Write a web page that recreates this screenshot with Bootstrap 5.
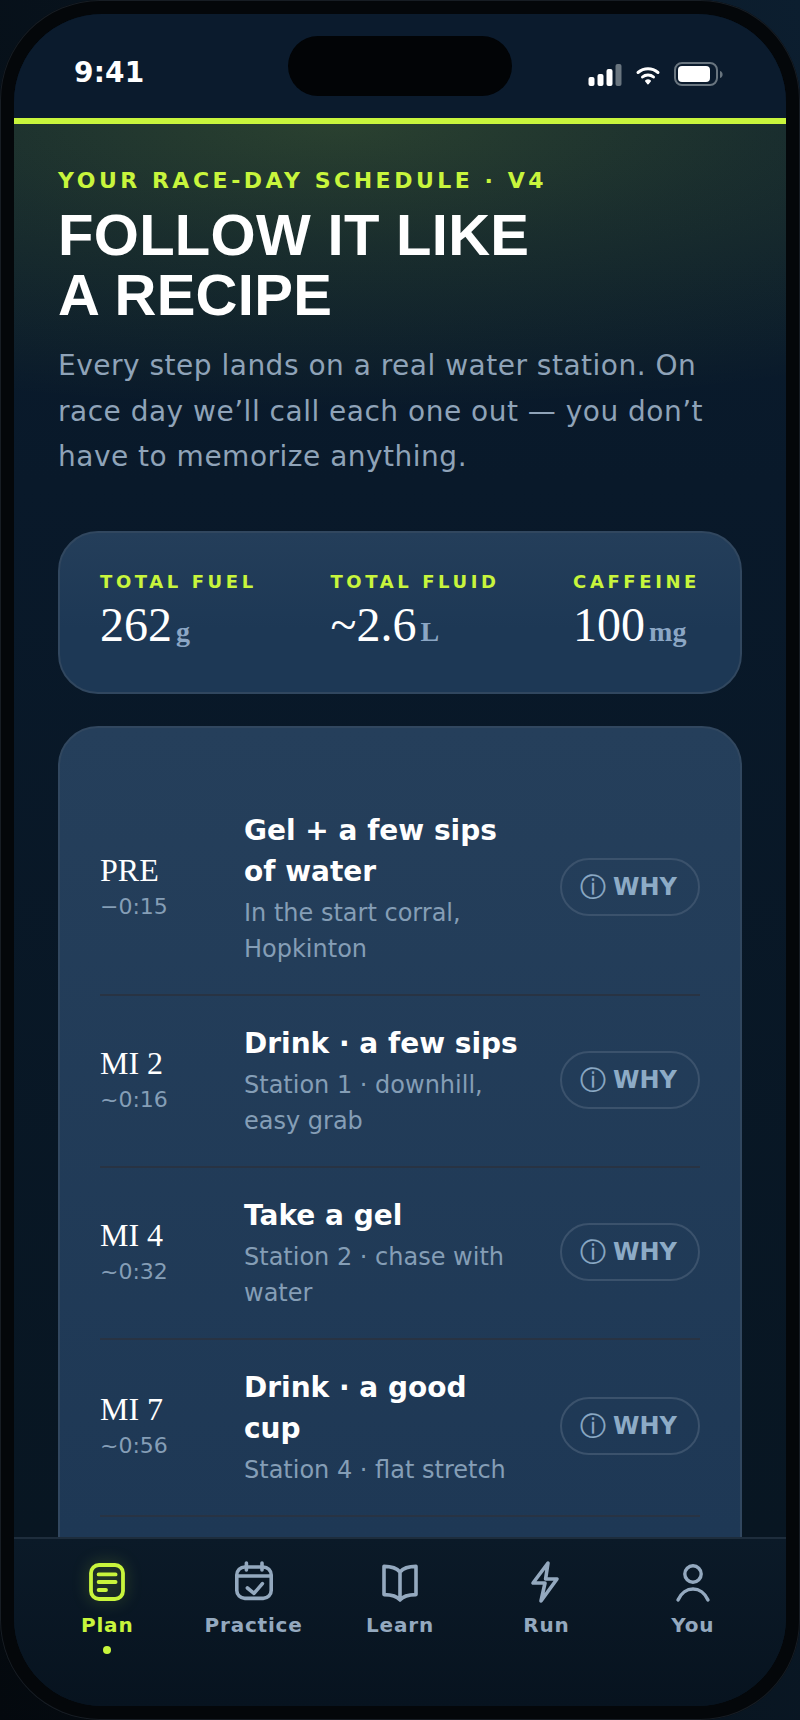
<!doctype html>
<html lang="en"><head><meta charset="utf-8"><title>Plan</title>
<link href="https://cdn.jsdelivr.net/npm/bootstrap@5.3.0/dist/css/bootstrap.min.css" rel="stylesheet">
<style>
html,body{height:100%;margin:0;overflow:hidden}
body{font-family:"DejaVu Sans",sans-serif;color:#fff;background:linear-gradient(75deg,#04090e,#0c1e2f)}
.device{width:800px;height:1720px;border-radius:100px;background:#04070a;padding:14px;box-shadow:inset 0 0 0 1px #171d24}
.screen{height:100%;border-radius:88px;overflow:hidden;background:#081624;position:relative}
.statusrow{height:104px;background:#0b1b2d;padding:0 62px 0 60px;position:relative;flex:none}
.clock{font-size:28px;font-weight:700;letter-spacing:.2px;line-height:1;margin-top:13px}
.island{position:absolute;left:274px;top:22px;width:224px;height:60px;border-radius:30px;background:#020406}
.sysicons{margin-top:20px}
.limebar{height:6px;background:#c8f53c;flex:none}
.viewport{flex:1 1 0;min-height:0;overflow:hidden;background:linear-gradient(180deg,#0a1c2d 0,#09192a 360px,#081622 100%)}
.hero{background:radial-gradient(130% 285px at 42% 0,rgba(200,245,60,.17),rgba(200,245,60,.085) 42%,rgba(200,245,60,0));padding:43px 44px 0 44px}
.eyebrow{font-size:22px;font-weight:700;letter-spacing:.16em;color:#c8f53c;line-height:28px}
.headline{font-family:"Liberation Sans",sans-serif;font-weight:700;font-size:58px;line-height:60px;letter-spacing:.3px;margin:10px 0 0;color:#fff}
.intro{font-size:28px;letter-spacing:.5px;line-height:45.5px;color:#8fa3b8;margin:18px 0 0}
.panel{--bs-card-bg:transparent;background:linear-gradient(180deg,#243e5a,#1d3855 60%);border:2px solid #31475f;margin:0 44px;border-radius:40px}
.stats{margin-top:51px;height:163px;padding:38px 40px 0}
.stat-k{font-size:18px;font-weight:700;letter-spacing:.2em;color:#c8f53c;line-height:22px;white-space:nowrap}
.stat-v{font-family:"Liberation Serif",serif;font-size:48px;line-height:48px;margin-top:8px;white-space:nowrap}
.stat-v b{font-size:28px;color:#8ba6c4;margin-left:4px}
.plan{margin-top:32px;padding:55px 40px 0;height:900px;background:linear-gradient(180deg,#253f5b,#1e3855 90%)}
.plan .list-group .list-group-item.step{padding:25px 0 27px;border-width:0 0 2px;border-style:solid;border-color:#283343;display:flex;align-items:center;background:transparent;color:#fff;border-radius:0}
.when{width:144px;flex:none}
.when-a{font-family:"Liberation Serif",serif;font-size:32px;line-height:40px}
.when-b{font-size:22px;line-height:34px;color:#859eb6}
.what{flex:1 1 0;min-width:0;padding:2px 36px 0 0}
.what-a{font-size:28px;font-weight:700;line-height:41px}
.what-b{font-size:24px;line-height:36px;color:#859eb6;margin-top:3px}
.whybtn{flex:none;width:140px;height:58px;border:2px solid #3b526c;border-radius:29px;color:#8dabc6;font-weight:700;font-size:24px;padding:0;display:flex;align-items:center;justify-content:center;gap:7px;background:transparent}
.infoglyph{font-weight:400;font-size:26px;line-height:1;margin-left:-3px;-webkit-text-stroke:.3px currentColor}
.tabbar{height:169px;flex:none;background:linear-gradient(180deg,#0b1a28,#07131f);border-top:2px solid #1e2d3c;padding:19px 20px 0}
.tab{width:146.4px;color:#94a9bf;font-size:20px;font-weight:700;letter-spacing:.8px;line-height:28px;text-decoration:none}
.tab svg{display:block;width:48px;height:48px;margin-bottom:5px}
.tab.on{color:#c8f53c}
.tab.on svg{filter:drop-shadow(0 0 8px rgba(200,245,60,.3))}
.pip{width:8px;height:8px;border-radius:50%;background:#c8f53c;margin-top:7px}
</style></head>
<body>
<div class="device"><div class="screen d-flex flex-column">
  <div class="statusrow d-flex align-items-center justify-content-between">
    <div class="clock">9:41</div><div class="island"></div>
    <svg class="sysicons" width="136" height="28" viewBox="0 0 136 28">
      <g fill="#fff"><rect x="0.500" y="15" width="6" height="9" rx="2"/><rect x="9.500" y="12" width="6" height="12" rx="2"/><rect x="18.500" y="7" width="6" height="17" rx="2"/></g>
      <rect x="27.500" y="2" width="6" height="22" rx="2" fill="#69757f"/>
      <g fill="none" stroke="#fff" stroke-linecap="round"><path d="M50 10.500C56 5.500 64 5.500 70 10.500" stroke-width="3"/><path d="M54.500 15C57.500 12.300 62.500 12.300 65.500 15" stroke-width="3"/></g><path d="M58 19C59.300 18 60.700 18 62 19L60 21.500Z" fill="#fff" stroke="#fff" stroke-width="2" stroke-linejoin="round"/>
      <rect x="87" y="1" width="42" height="22" rx="7" fill="none" stroke="#69757f" stroke-width="2"/><rect x="90" y="4" width="32" height="16" rx="4" fill="#fff"/><path d="M132 9v7c2-.6 2.600-2 2.600-3.500S134 9.600 132 9z" fill="#69757f"/>
    </svg>
  </div>
  <div class="limebar"></div>
  <div class="viewport">
    <div class="hero">
      <div class="eyebrow">YOUR RACE-DAY SCHEDULE · V4</div>
      <h1 class="headline">FOLLOW IT LIKE<br>A RECIPE</h1>
      <p class="intro">Every step lands on a real water station. On race day we’ll call each one out — you don’t have to memorize anything.</p>
    </div>
    <div class="card panel stats d-flex flex-row justify-content-between">
      <div><div class="stat-k">TOTAL FUEL</div><div class="stat-v">262<b>g</b></div></div>
      <div><div class="stat-k">TOTAL FLUID</div><div class="stat-v">~2.6<b>L</b></div></div>
      <div><div class="stat-k">CAFFEINE</div><div class="stat-v">100<b>mg</b></div></div>
    </div>
    <div class="card panel plan">
      <div class="list-group list-group-flush">
        <div class="list-group-item step"><div class="when"><div class="when-a">PRE</div><div class="when-b">−0:15</div></div><div class="what"><div class="what-a">Gel + a few sips of water</div><div class="what-b">In the start corral, Hopkinton</div></div><button class="btn whybtn"><span class="infoglyph">ⓘ</span>WHY</button></div>
        <div class="list-group-item step"><div class="when"><div class="when-a">MI 2</div><div class="when-b">~0:16</div></div><div class="what"><div class="what-a">Drink · a few sips</div><div class="what-b">Station 1 · downhill, easy grab</div></div><button class="btn whybtn"><span class="infoglyph">ⓘ</span>WHY</button></div>
        <div class="list-group-item step"><div class="when"><div class="when-a">MI 4</div><div class="when-b">~0:32</div></div><div class="what"><div class="what-a">Take a gel</div><div class="what-b">Station 2 · chase with water</div></div><button class="btn whybtn"><span class="infoglyph">ⓘ</span>WHY</button></div>
        <div class="list-group-item step"><div class="when"><div class="when-a">MI 7</div><div class="when-b">~0:56</div></div><div class="what"><div class="what-a">Drink · a good cup</div><div class="what-b">Station 4 · flat stretch</div></div><button class="btn whybtn"><span class="infoglyph">ⓘ</span>WHY</button></div>
      </div>
    </div>
  </div>
  <nav class="tabbar d-flex">
    <a class="tab on d-flex flex-column align-items-center" href="#"><svg viewBox="0 0 24 24" fill="none" stroke="currentColor" stroke-width="1.900" stroke-linecap="round"><rect x="4" y="3.500" width="16" height="17" rx="4"/><path d="M7.800 8.200H16.300M7.800 12H16.300M7.800 16H11.500"/></svg>Plan<span class="pip"></span></a>
    <a class="tab d-flex flex-column align-items-center" href="#"><svg viewBox="0 0 24 24" fill="none" stroke="currentColor" stroke-width="1.800" stroke-linecap="round" stroke-linejoin="round"><rect x="3.400" y="4.500" width="17.200" height="15.700" rx="4"/><path d="M3.400 9H20.600M8.200 2.500V6M16 2.500V6M8.700 15L12 17.700L16.200 12.800"/></svg>Practice</a>
    <a class="tab d-flex flex-column align-items-center" href="#"><svg viewBox="0 0 24 24" fill="none" stroke="currentColor" stroke-width="1.800" stroke-linecap="round" stroke-linejoin="round"><path d="M12 7C10.500 5.200 7.500 4.200 4 4.200V18.300C7.500 18.300 10.500 19 12 21C13.500 19 16.500 18.300 20 18.300V4.200C16.500 4.200 13.500 5.200 12 7ZM12 7V20.500"/></svg>Learn</a>
    <a class="tab d-flex flex-column align-items-center" href="#"><svg viewBox="0 0 24 24" fill="none" stroke="currentColor" stroke-width="1.800" stroke-linecap="round" stroke-linejoin="round"><path d="M13 2.500L5.500 12.500H11.500L9.500 21.500L17.500 10.500H11.800Z"/></svg>Run</a>
    <a class="tab d-flex flex-column align-items-center" href="#"><svg viewBox="0 0 24 24" fill="none" stroke="currentColor" stroke-width="1.700" stroke-linecap="round" stroke-linejoin="round"><circle cx="12" cy="8" r="4.100"/><path d="M4.500 21C6 17.500 9 15.500 12 15.500S18 17.500 19.500 21"/></svg>You</a>
  </nav>
</div></div>
<script src="https://cdn.jsdelivr.net/npm/bootstrap@5.3.0/dist/js/bootstrap.bundle.min.js"></script>
</body></html>
